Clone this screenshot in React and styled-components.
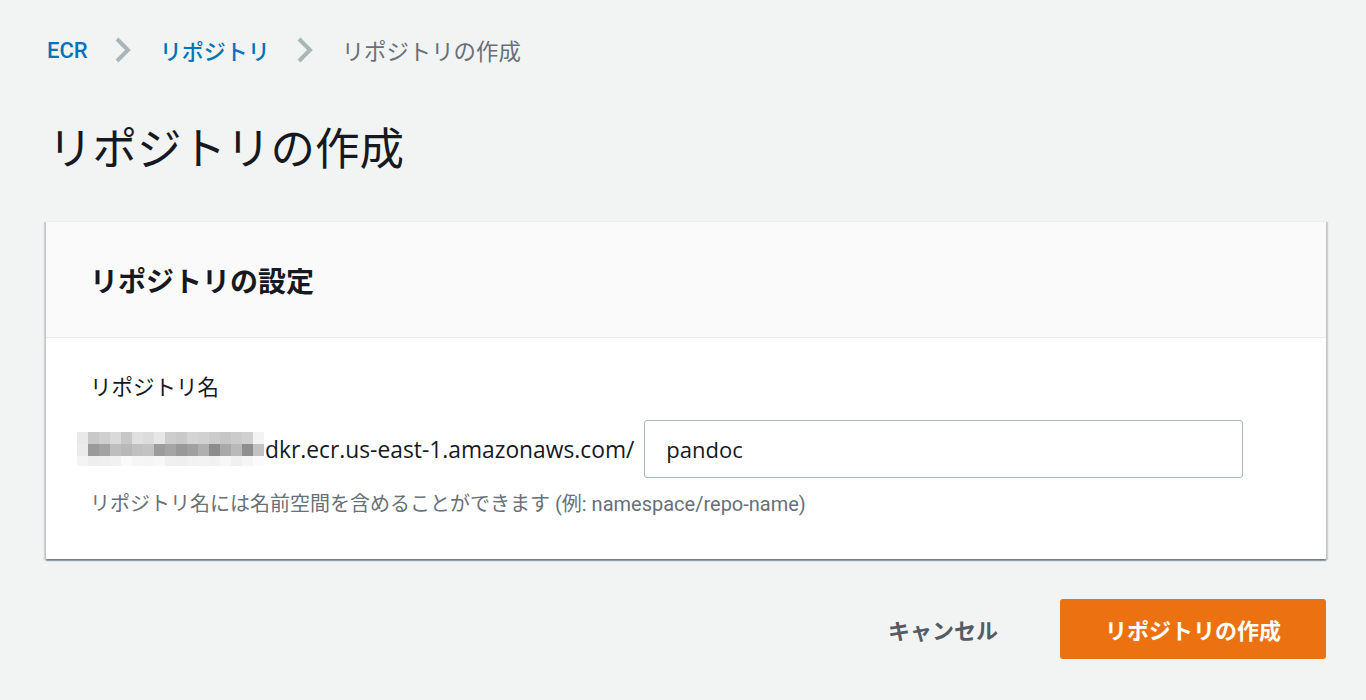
import React from "react";
import styled, { createGlobalStyle } from "styled-components";

const GlobalStyle = createGlobalStyle`
	body {
		margin: 0;
		background: #f2f3f3;
		font-family: Roboto, "Noto Sans CJK JP", sans-serif;
		color: #16191f;
	}
`;

// pixelated (masked) account id in front of the registry host
const mask = [
	["#e9e9e9", "#c8c8c8", "#cfcfcf", "#d9d9d9", "#c7c7c7", "#e0e0e0", "#dcdcdc", "#e6e6e6", "#cdcdcd", "#c9c9c9", "#d4d4d4", "#d1d1d1", "#cccccc", "#c6c6c6", "#cbcbcb", "#d0d0d0", "#f3f3f3"],
	["#ebebeb", "#9a9a9a", "#a3a3a3", "#bebebe", "#b8b8b8", "#c0c0c0", "#c3c3c3", "#9c9c9c", "#a5a5a5", "#999999", "#a0a0a0", "#b0b0b0", "#8c8c8c", "#a9a9a9", "#b9b9b9", "#8f8f8f", "#c2c2c2"],
	["#f4f4f4", "#eeeeee", "#efefef", "#f1f1f1", "#fafafa", "#f6f6f6", "#f5f5f5", "#f8f8f8", "#f0f0f0", "#efefef", "#f2f2f2", "#f3f3f3", "#f1f1f1", "#f7f7f7", "#f0f0f0", "#f5f5f5", "#fbfbfb"],
];

function Chevron() {
	return (
		<svg width="18" height="26" viewBox="0 0 18 26">
			<path d="M3 2 L14 13 L3 24" fill="none" stroke="#aab7b8" strokeWidth="4" />
		</svg>
	);
}

function MaskedId() {
	const h = [12, 12, 10];
	let y = 0;
	return (
		<svg width="188" height="34" viewBox="0 0 188 34">
			{mask.map((row, r) => {
				const top = y;
				y += h[r];
				return row.map((c, i) => (
					<rect key={r + "-" + i} x={i * 11} y={top} width="11" height={h[r]} fill={c} />
				));
			})}
		</svg>
	);
}

export default function App() {
	return (
		<>
			<GlobalStyle />
			<Page>
				<Breadcrumbs>
					<Crumb href="#">ECR</Crumb>
					<Chevron />
					<Crumb href="#">リポジトリ</Crumb>
					<Chevron />
					<Crumb current>リポジトリの作成</Crumb>
				</Breadcrumbs>
				<Title>リポジトリの作成</Title>
				<Card>
					<CardHeader>
						<h2>リポジトリの設定</h2>
					</CardHeader>
					<CardBody>
						<Label>リポジトリ名</Label>
						<Row>
							<Prefix>
								<MaskedId />
								<span>dkr.ecr.us-east-1.amazonaws.com/</span>
							</Prefix>
							<Input defaultValue="pandoc" />
						</Row>
						<Hint>リポジトリ名には名前空間を含めることができます (例: namespace/repo-name)</Hint>
					</CardBody>
				</Card>
				<Actions>
					<CancelButton>キャンセル</CancelButton>
					<PrimaryButton>リポジトリの作成</PrimaryButton>
				</Actions>
			</Page>
		</>
	);
}

const Page = styled.div`
	padding: 26px 40px 0 46px;
`;

const Breadcrumbs = styled.nav`
	display: flex;
	align-items: center;
	height: 48px;
	padding-left: 1px;

	svg {
		margin: 0 28px 0 26px;
	}
`;

const Crumb = styled.a`
	font-size: ${(props) => (props.current ? "22.4px" : "22px")};
	font-weight: ${(props) => (props.current ? 400 : 500)};
	color: ${(props) => (props.current ? "#687078" : "#0073bb")};
	text-decoration: none;
`;

const Title = styled.h1`
	margin: 46px 0 0 2px;
	height: 60px;
	line-height: 60px;
	font-size: 44.5px;
	font-weight: 400;
	color: #16191f;
`;

const Card = styled.section`
	margin-top: 41px;
	background: #fff;
	border-top: 1px solid #eaeded;
	box-shadow: 0 2px 1px 0 rgba(0, 28, 36, 0.35), 2px 1px 1px 0 rgba(0, 28, 36, 0.15),
		-2px 1px 1px 0 rgba(0, 28, 36, 0.15);
`;

const CardHeader = styled.header`
	display: flex;
	align-items: center;
	height: 115px;
	padding: 0 44px;
	background: #fafafa;
	border-bottom: 1px solid #eaeded;

	h2 {
		margin: 0;
		font-size: 28px;
		font-weight: 700;
		color: #16191f;
	}
`;

const CardBody = styled.div`
	padding: 35px 83px 42px 44px;
`;

const Label = styled.div`
	line-height: 30px;
	font-size: 21.5px;
	color: #16191f;
`;

const Row = styled.div`
	display: flex;
	align-items: center;
	margin-top: 17px;
	gap: 10px;
`;

const Prefix = styled.div`
	display: flex;
	align-items: center;
	margin-left: -13px;
	font-family: "Open Sans", "Noto Sans CJK JP", sans-serif;
	font-size: 22.8px;
	color: #16191f;
`;

const Input = styled.input`
	flex: 1;
	min-width: 0;
	height: 58px;
	box-sizing: border-box;
	padding: 0 21px;
	border: 1px solid #aab7b8;
	border-radius: 3px;
	font-family: "Open Sans", "Noto Sans CJK JP", sans-serif;
	font-size: 22px;
	color: #16191f;
	background: #fff;
	outline: none;
`;

const Hint = styled.div`
	margin-top: 13px;
	line-height: 26px;
	font-size: 20px;
	color: #687078;
`;

const Actions = styled.div`
	display: flex;
	justify-content: flex-end;
	align-items: center;
	margin-top: 40px;
`;

const CancelButton = styled.button`
	margin-right: 62px;
	padding: 0;
	border: none;
	background: none;
	font-family: Roboto, "Noto Sans CJK JP", sans-serif;
	font-size: 22px;
	font-weight: 700;
	color: #545b64;
	cursor: pointer;
`;

const PrimaryButton = styled.button`
	width: 266px;
	height: 60px;
	border: none;
	border-radius: 3px;
	background: #ec7211;
	font-family: Roboto, "Noto Sans CJK JP", sans-serif;
	font-size: 22px;
	font-weight: 700;
	color: #fff;
	cursor: pointer;
`;
